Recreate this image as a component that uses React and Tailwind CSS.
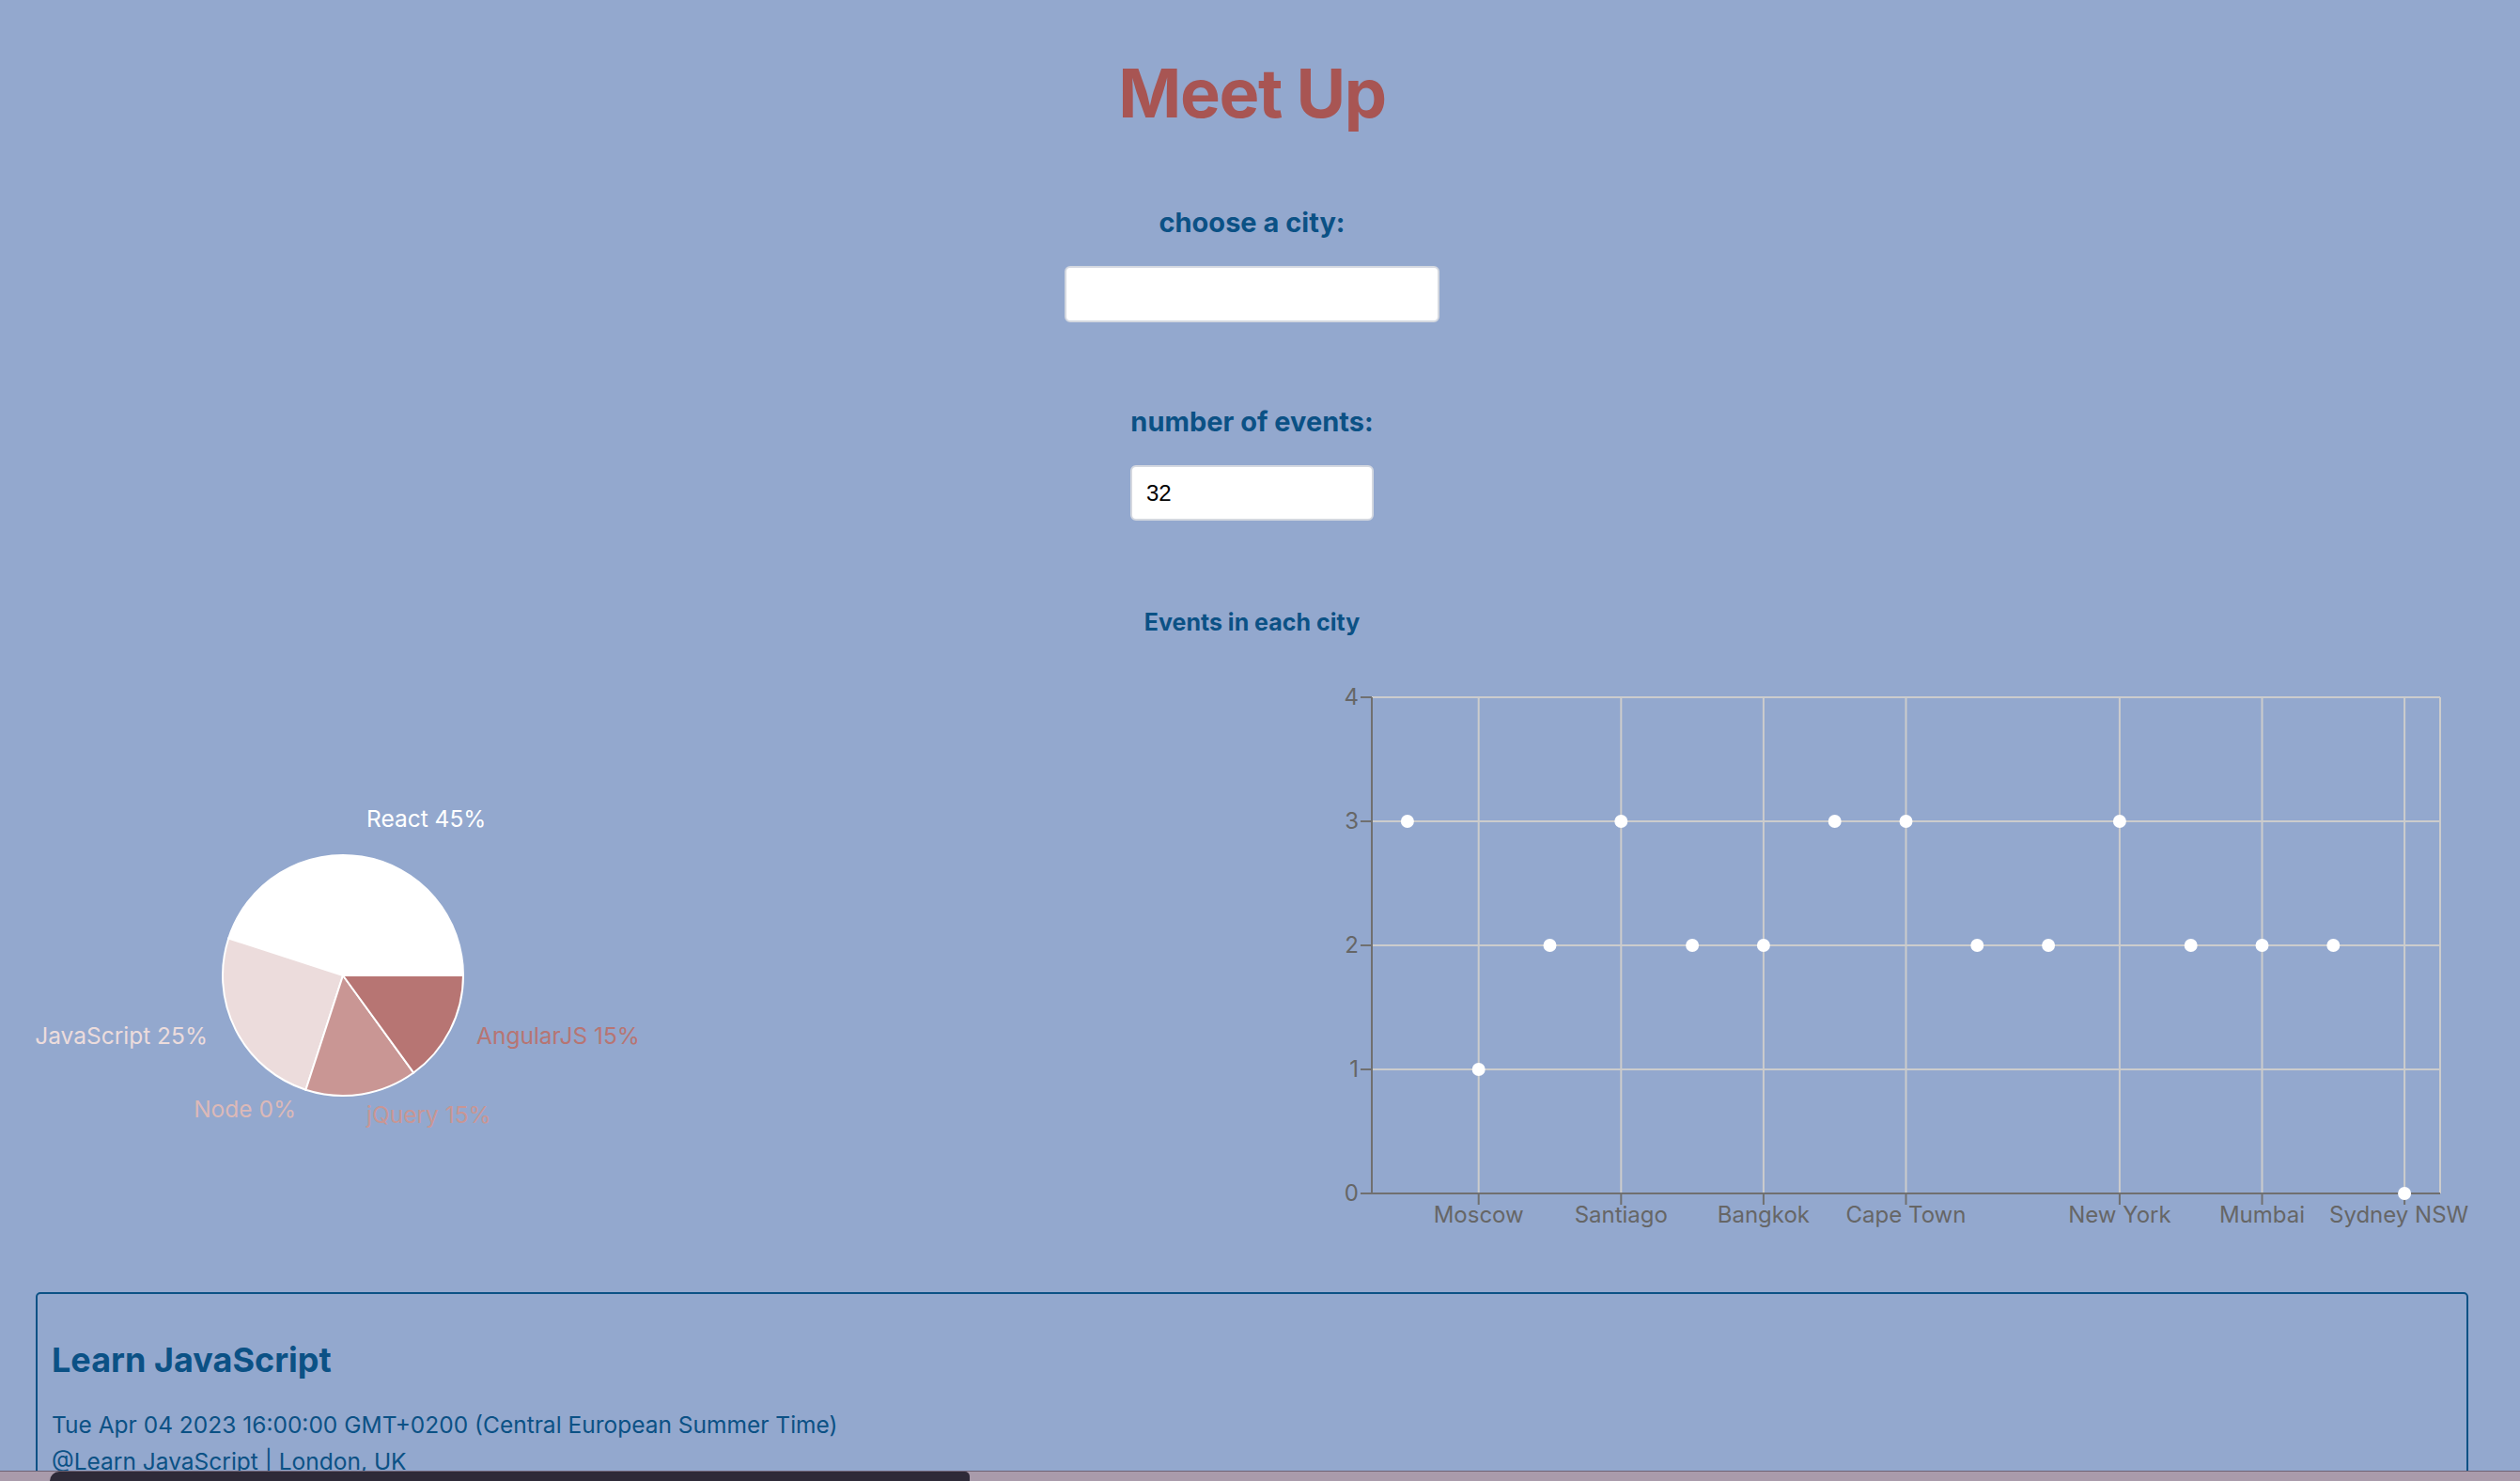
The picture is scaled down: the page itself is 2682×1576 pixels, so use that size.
import React from 'react';

// pie data, angles counted counter-clockwise from 3 o'clock (like recharts)
const PIE = [
  { name: 'React', value: 45, color: '#ffffff' },
  { name: 'JavaScript', value: 25, color: '#ecdcdc' },
  { name: 'Node', value: 0, color: '#dcb9b8' },
  { name: 'jQuery', value: 15, color: '#c99694' },
  { name: 'AngularJS', value: 15, color: '#b77573' },
];

const LABELS = [
  { text: 'React 45%', x: 390, y: 180, anchor: 'start', color: '#ffffff' },
  { text: 'JavaScript 25%', x: 221, y: 411, anchor: 'end', color: '#ecdcdc' },
  { text: 'AngularJS 15%', x: 507, y: 411, anchor: 'start', color: '#b77573' },
  { text: 'Node 0%', x: 315, y: 489, anchor: 'end', color: '#dcb9b8' },
  { text: 'jQuery 15%', x: 390, y: 495, anchor: 'start', color: '#c99694' },
];

const CITIES = [
  { name: 'London, UK', count: 3 },
  { name: 'Moscow', count: 1, tick: true },
  { name: 'Berlin', count: 2 },
  { name: 'Santiago', count: 3, tick: true },
  { name: 'Toronto', count: 2 },
  { name: 'Bangkok', count: 2, tick: true },
  { name: 'Dubai', count: 3 },
  { name: 'Cape Town', count: 3, tick: true },
  { name: 'Munich', count: 2 },
  { name: 'Seoul', count: 2 },
  { name: 'New York', count: 3, tick: true },
  { name: 'Paris', count: 2 },
  { name: 'Mumbai', count: 2, tick: true },
  { name: 'Mexico City', count: 2 },
  { name: 'Sydney NSW', count: 0, tick: true, shift: -6 },
];

const polar = (cx, cy, r, deg) => {
  const a = (deg * Math.PI) / 180;
  return [cx + r * Math.cos(a), cy - r * Math.sin(a)];
};

const EventGenre = () => {
  const cx = 365;
  const cy = 338;
  const r = 128;
  let start = 0;
  const slices = PIE.map((d) => {
    const sweep = (d.value / 100) * 360;
    const s = start;
    start += sweep;
    return { ...d, s, e: s + sweep };
  }).filter((d) => d.value > 0);

  return (
    <svg width="1332" height="640" className="shrink-0">
      {slices.map((d) => {
        const [x1, y1] = polar(cx, cy, r, d.s);
        const [x2, y2] = polar(cx, cy, r, d.e);
        const large = d.e - d.s > 180 ? 1 : 0;
        return (
          <path
            key={d.name}
            d={`M${cx},${cy} L${x1},${y1} A${r},${r} 0 ${large} 0 ${x2},${y2} Z`}
            fill={d.color}
            stroke="#ffffff"
            strokeWidth="2"
          />
        );
      })}
      {LABELS.map((l) => (
        <text key={l.text} x={l.x} y={l.y} textAnchor={l.anchor} fill={l.color} fontSize="24.5">
          {l.text}
        </text>
      ))}
    </svg>
  );
};

const CityScatter = () => {
  const left = 128;
  const right = 1265;
  const top = 42;
  const bottom = 570;
  const band = (right - left) / CITIES.length;
  const unit = (bottom - top) / 4;
  const xOf = (i) => left + band * (i + 0.5);
  const yOf = (v) => bottom - v * unit;

  return (
    <svg width="1333" height="640" className="shrink-0">
      {/* grid */}
      {[1, 2, 3, 4].map((v) => (
        <line key={v} x1={left} x2={right} y1={yOf(v)} y2={yOf(v)} stroke="#cccccc" strokeWidth="2" />
      ))}
      {CITIES.map((c, i) =>
        c.tick ? <line key={c.name} x1={xOf(i)} x2={xOf(i)} y1={top} y2={bottom} stroke="#cccccc" strokeWidth="2" /> : null
      )}
      <line x1={right} x2={right} y1={top} y2={bottom} stroke="#cccccc" strokeWidth="2" />

      {/* axes */}
      <line x1={left} x2={left} y1={top} y2={bottom} stroke="#707070" strokeWidth="2" />
      <line x1={left} x2={right} y1={bottom} y2={bottom} stroke="#707070" strokeWidth="2" />
      {[0, 1, 2, 3, 4].map((v) => (
        <g key={v}>
          <line x1={left - 12} x2={left} y1={yOf(v)} y2={yOf(v)} stroke="#707070" strokeWidth="2" />
          <text x={left - 14} y={yOf(v) + 8} textAnchor="end" fontSize="24" fill="#666666">
            {v}
          </text>
        </g>
      ))}
      {CITIES.map((c, i) =>
        c.tick ? (
          <g key={c.name}>
            <line x1={xOf(i)} x2={xOf(i)} y1={bottom} y2={bottom + 12} stroke="#707070" strokeWidth="2" />
            <text x={xOf(i) + (c.shift || 0)} y={bottom + 31} textAnchor="middle" fontSize="24" fill="#666666">
              {c.name}
            </text>
          </g>
        ) : null
      )}

      {/* points */}
      {CITIES.map((c, i) => (
        <circle key={c.name} cx={xOf(i)} cy={yOf(c.count)} r="7" fill="#ffffff" />
      ))}
    </svg>
  );
};

const App = () => {
  return (
    <div className="relative w-[2682px] h-[1576px] overflow-hidden bg-[#93a8ce] font-['Inter',sans-serif]">
      <div className="w-[2665px] flex flex-col items-center">
        <h1 className="pt-[63px] text-[72px] leading-none font-bold tracking-[-0.02em] text-[#a85553]">Meet Up</h1>

        <label className="mt-[87px] text-[29px] leading-none font-bold text-[#0b5185]">choose a city:</label>
        <input
          type="text"
          className="mt-[32px] w-[399px] h-[60px] rounded-[6px] border-2 border-[#d4d8e0] bg-white px-4 text-[24px] outline-none"
        />

        <label className="mt-[91px] text-[29px] leading-none font-bold text-[#0b5185]">number of events:</label>
        <input
          type="number"
          defaultValue="32"
          className="mt-[32px] w-[259px] h-[59px] rounded-[6px] border-2 border-[#d4d8e0] bg-white pl-[15px] text-[24px] text-black font-['Liberation_Sans',Arial,sans-serif] outline-none"
        />

        <h4 className="mt-[95px] h-[26px] text-[25px] leading-[26px] font-bold text-[#0b5185]">Events in each city</h4>

        <div className="mt-[25px] flex w-full">
          <EventGenre />
          <CityScatter />
        </div>

        <div className="mt-[35px] w-[2589px] h-[400px] rounded-[5px] border-2 border-[#0b5185] px-[15px] pt-[52px] text-[#0b5185]">
          <h2 className="text-[36px] leading-none font-bold">Learn JavaScript</h2>
          <p className="mt-[39px] text-[24.5px] leading-none">Tue Apr 04 2023 16:00:00 GMT+0200 (Central European Summer Time)</p>
          <p className="mt-[14px] text-[24.5px] leading-none">@Learn JavaScript | London, UK</p>
        </div>
      </div>

      {/* strip of the desktop showing under the window */}
      <div className="absolute bottom-0 left-0 w-full h-[11px] border-t border-[#6e6375] bg-[#a99bab]">
        <div className="ml-[53px] w-[979px] h-full rounded-tl-[12px] rounded-tr-[6px] bg-[#2e2a38]" />
      </div>
    </div>
  );
};

export default App;
